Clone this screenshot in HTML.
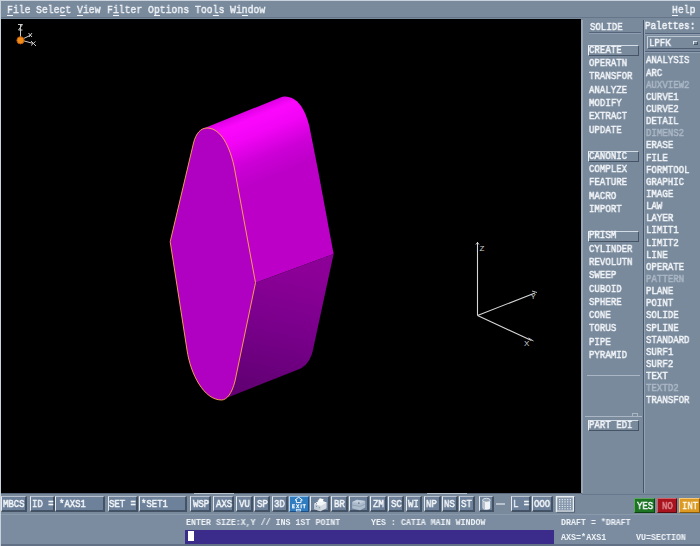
<!DOCTYPE html>
<html><head><meta charset="utf-8"><title>CATIA</title>
<style>
html,body{margin:0;padding:0;}
body{width:700px;height:546px;overflow:hidden;background:#798a9d;position:relative;font-family:"Liberation Mono",monospace;}
.abs{position:absolute;}
.t,.m,.s{will-change:transform;}
#view{position:absolute;left:1px;top:19.2px;width:580px;height:473.5px;background:#000;overflow:hidden;}
.t{position:absolute;white-space:pre;color:#f2f5f8;font-family:"Liberation Mono",monospace;font-weight:normal;-webkit-text-stroke:0.5px;font-size:10.5px;line-height:12px;transform-origin:0 0;transform:scaleX(.864);}
.t.dis{color:#acb8c6;}
.m{position:absolute;white-space:pre;color:#eef2f6;font-family:"Liberation Mono",monospace;font-weight:normal;-webkit-text-stroke:0.45px #f0f3f7;font-size:11.5px;line-height:13px;transform-origin:0 0;transform:scaleX(.85);}
.m u{text-decoration:none;position:relative;display:inline-block;}
.m u::after{content:'';position:absolute;left:0;right:0;top:12.4px;height:1px;background:#f2f5f8;}
.s{position:absolute;white-space:pre;color:#eef2f6;font-family:"Liberation Mono",monospace;font-weight:bold;font-size:8.4px;line-height:10px;transform-origin:0 0;transform:scaleX(.99);}
.tb{position:absolute;white-space:pre;color:#f2f5f8;font-family:"Liberation Mono",monospace;font-weight:normal;-webkit-text-stroke:0.55px #f2f5f8;font-size:11.5px;line-height:13px;transform-origin:0 0;transform:scaleX(.78);will-change:transform;}
.tbb{position:absolute;box-sizing:border-box;background:#6d819b;border-style:solid;border-width:1.4px 2px 2px 1.6px;border-color:#b8c3cf #445266 #445266 #e6ebf1;}
.btn{position:absolute;box-sizing:border-box;background:#798a9d;border:1.2px solid;border-color:#d4dce5 #465466 #465466 #eef2f6;}
.fld{position:absolute;box-sizing:border-box;background:#798a9d;border:1px solid;border-color:#465466 #c8d1dc #c8d1dc #465466;}
.hl{position:absolute;height:1px;background:#55647a;border-bottom:1px solid #8e9db0;}
.vl{position:absolute;width:1px;background:#465466;border-right:1px solid #93a2b4;}
</style></head><body>

<div class="abs" style="left:1px;top:514.3px;width:699px;height:31.7px;background:#7b8ca1;border-top:1px solid #8a9aad"></div>
<div class="abs" style="left:0;top:0;width:700px;height:1px;background:#c9d2dc"></div>
<div class="abs" style="left:0;top:0;width:1px;height:546px;background:#c9d2dc"></div>
<div class="abs" style="left:1px;top:17.2px;width:699px;height:1.3px;background:#66758a"></div>
<div class="m" style="left:6.6px;top:2.5px"><u>F</u>ile</div>
<div class="m" style="left:36px;top:2.5px">Sele<u>c</u>t</div>
<div class="m" style="left:77px;top:2.5px"><u>V</u>iew</div>
<div class="m" style="left:106.5px;top:2.5px">F<u>i</u>lter</div>
<div class="m" style="left:147.5px;top:2.5px">O<u>p</u>tions</div>
<div class="m" style="left:194.5px;top:2.5px">Too<u>l</u>s</div>
<div class="m" style="left:229.5px;top:2.5px">Wi<u>n</u>dow</div>
<div class="m" style="left:671.5px;top:2.5px"><u>H</u>elp</div>
<div id="view">
<svg width="580" height="473" viewBox="1 20 580 473" style="position:absolute;left:0;top:0.8px">
<defs>
<linearGradient id="gtop" x1="199.0" y1="131.0" x2="225.2" y2="195.9" gradientUnits="userSpaceOnUse">
<stop offset="0" stop-color="#e000e6"/><stop offset="0.12" stop-color="#fb08fc"/><stop offset="0.35" stop-color="#f204f5"/><stop offset="0.7" stop-color="#cc00d6"/><stop offset="1" stop-color="#bc00c8"/></linearGradient>
<linearGradient id="gbot" x1="290" y1="270" x2="262" y2="392" gradientUnits="userSpaceOnUse">
<stop offset="0" stop-color="#8c0098"/><stop offset="0.5" stop-color="#78008a"/><stop offset="1" stop-color="#620074"/></linearGradient>
</defs>
<!-- side surface (top fillet + upper right face) -->
<path d="M201 129.5 L281 97.3 C282.5 96.7 283.5 96.5 285 96.5 C297 97 305 108 309.5 127 L318 170 L333.6 254 L255.5 282.7 L200 220 Z" fill="url(#gtop)"/>
<!-- bottom face -->
<path d="M255.5 282.7 L333.6 254 L312.5 352 C310 361 305 366.5 299.5 369 L221.4 400 L225 380 Z" fill="url(#gbot)"/>
<!-- front face -->
<path d="M170.2 241.7 L193.5 143 C196 133 201 128 207 128 C218 128 228 140 234 166 L255.5 282.7 L235 381 C232 393 227 400 221.4 400 C204 400 190.5 374 187 350 Z" fill="#b000c2" stroke="#ffae48" stroke-width="0.9"/>
<!-- big axis -->
<g stroke="#d6d6d6" stroke-width="1.1" fill="none">
<path d="M477.5 315.5 L477.5 242 M477.5 315.5 L535 293 M477.5 315.5 L531.5 340.5"/>
</g>
<g fill="#d0d0d0" font-family="Liberation Sans" font-size="8">
<text x="479.5" y="251">Z</text><text x="530.5" y="298.5">Y</text><text x="524" y="346">X</text></g>
<path d="M475.8 244.5 L477.5 242.5 L479 244.5 M532 291 L537 292.5 M528.5 338 L533.5 341" stroke="#d0d0d0" stroke-width="0.9" fill="none"/>
<!-- small axis -->
<g stroke="#c8c8c8" stroke-width="1" fill="none">
<path d="M20.5 40 L20.5 25 M20.5 40 L31 35 M20.5 40 L33.5 43.5 M28.5 33 L32 37 M32 33 L29 37 M31 41 L36 46 M35.5 41.5 L31 45.5 M18 24.5 L22.5 24.5 L18.5 30 L22.5 30"/>
</g>
<circle cx="20.5" cy="40.3" r="3.6" fill="#f08a18" stroke="#b85a08" stroke-width="1"/>
</svg>
</div>
<div class="abs" style="left:1px;top:492.7px;width:581px;height:1.3px;background:#5a687c"></div>
<div class="abs" style="left:582px;top:493.8px;width:118px;height:1px;background:#68778c"></div>
<div class="abs" style="left:193.7px;top:492.7px;width:40.3px;height:1.2px;background:#b4bfcb"></div>
<div class="abs" style="left:427.4px;top:492.7px;width:39.5px;height:1.2px;background:#b4bfcb"></div>
<div class="abs" style="left:581px;top:20px;width:2px;height:473px;background:#98a6b6"></div>
<div class="vl" style="left:642.6px;top:20px;height:473px"></div>
<div class="t" style="left:589.5px;top:21px">SOLIDE</div>
<div class="hl" style="left:589px;top:31.8px;width:52px"></div>
<div class="t" style="left:645.3px;top:20px;transform:scaleX(.885)">Palettes:</div>
<div class="hl" style="left:645px;top:33px;width:55px"></div>
<div class="btn" style="left:647px;top:36.2px;width:54px;height:13.3px;border-color:#bcc7d2 #4f5e72 #4f5e72 #c8d1db"></div>
<div class="t" style="left:649px;top:36.7px">LPFK</div>
<div class="btn" style="left:693px;top:41px;width:5px;height:4px"></div>
<div class="hl" style="left:645px;top:51px;width:55px"></div>
<div class="btn" style="left:587.8px;top:44.8px;width:51.6px;height:11px"></div>
<div class="t" style="left:589.2px;top:43.7px">CREATE</div>
<div class="t" style="left:589.2px;top:56.8px">OPERATN</div>
<div class="t" style="left:589.2px;top:70.2px">TRANSFOR</div>
<div class="t" style="left:589.2px;top:83.6px">ANALYZE</div>
<div class="t" style="left:589.2px;top:96.9px">MODIFY</div>
<div class="t" style="left:589.2px;top:110.2px">EXTRACT</div>
<div class="t" style="left:589.2px;top:123.5px">UPDATE</div>
<div class="btn" style="left:587.8px;top:151.0px;width:51.6px;height:11px"></div>
<div class="t" style="left:589.2px;top:149.9px">CANONIC</div>
<div class="t" style="left:589.2px;top:163.1px">COMPLEX</div>
<div class="t" style="left:589.2px;top:176.3px">FEATURE</div>
<div class="t" style="left:589.2px;top:189.5px">MACRO</div>
<div class="t" style="left:589.2px;top:202.7px">IMPORT</div>
<div class="btn" style="left:587.8px;top:230.5px;width:51.6px;height:11px"></div>
<div class="t" style="left:589.2px;top:229.4px">PRISM</div>
<div class="t" style="left:589.2px;top:242.7px">CYLINDER</div>
<div class="t" style="left:589.2px;top:255.9px">REVOLUTN</div>
<div class="t" style="left:589.2px;top:269.2px">SWEEP</div>
<div class="t" style="left:589.2px;top:282.5px">CUBOID</div>
<div class="t" style="left:589.2px;top:295.8px">SPHERE</div>
<div class="t" style="left:589.2px;top:309.1px">CONE</div>
<div class="t" style="left:589.2px;top:322.4px">TORUS</div>
<div class="t" style="left:589.2px;top:335.7px">PIPE</div>
<div class="t" style="left:589.2px;top:349.0px">PYRAMID</div>
<div class="btn" style="left:587.8px;top:420.2px;width:51.6px;height:11px"></div>
<div class="t" style="left:589.2px;top:419.1px">PART EDI</div>
<div class="abs" style="left:586.5px;top:375px;width:53.5px;height:1px;background:#aab6c4"></div>
<div class="abs" style="left:584.5px;top:416px;width:57.5px;height:1px;background:#aab6c4"></div>
<div class="abs" style="left:632px;top:412.6px;width:5.6px;height:4px;box-sizing:border-box;border:1px solid #aab6c4;border-bottom:none"></div>
<div class="t" style="left:645.7px;top:54.4px">ANALYSIS</div>
<div class="t" style="left:645.7px;top:66.5px">ARC</div>
<div class="t dis" style="left:645.7px;top:78.7px">AUXVIEW2</div>
<div class="t" style="left:645.7px;top:90.8px">CURVE1</div>
<div class="t" style="left:645.7px;top:103.0px">CURVE2</div>
<div class="t" style="left:645.7px;top:115.1px">DETAIL</div>
<div class="t dis" style="left:645.7px;top:127.2px">DIMENS2</div>
<div class="t" style="left:645.7px;top:139.4px">ERASE</div>
<div class="t" style="left:645.7px;top:151.5px">FILE</div>
<div class="t" style="left:645.7px;top:163.7px">FORMTOOL</div>
<div class="t" style="left:645.7px;top:175.8px">GRAPHIC</div>
<div class="t" style="left:645.7px;top:187.9px">IMAGE</div>
<div class="t" style="left:645.7px;top:200.1px">LAW</div>
<div class="t" style="left:645.7px;top:212.2px">LAYER</div>
<div class="t" style="left:645.7px;top:224.4px">LIMIT1</div>
<div class="t" style="left:645.7px;top:236.5px">LIMIT2</div>
<div class="t" style="left:645.7px;top:248.6px">LINE</div>
<div class="t" style="left:645.7px;top:260.8px">OPERATE</div>
<div class="t dis" style="left:645.7px;top:272.9px">PATTERN</div>
<div class="t" style="left:645.7px;top:285.1px">PLANE</div>
<div class="t" style="left:645.7px;top:297.2px">POINT</div>
<div class="t" style="left:645.7px;top:309.3px">SOLIDE</div>
<div class="t" style="left:645.7px;top:321.5px">SPLINE</div>
<div class="t" style="left:645.7px;top:333.6px">STANDARD</div>
<div class="t" style="left:645.7px;top:345.8px">SURF1</div>
<div class="t" style="left:645.7px;top:357.9px">SURF2</div>
<div class="t" style="left:645.7px;top:370.0px">TEXT</div>
<div class="t dis" style="left:645.7px;top:382.2px">TEXTD2</div>
<div class="t" style="left:645.7px;top:394.3px">TRANSFOR</div>
<div class="tbb" style="left:1.3px;top:495.5px;width:25.7px;height:16.5px;"></div>
<div class="tb" style="left:3.0px;top:497.4px;">MBCS</div>
<div class="tbb" style="left:30.2px;top:495.5px;width:24.5px;height:16.5px;"></div>
<div class="tb" style="left:32.2px;top:497.4px;">ID =</div>
<div class="tbb" style="left:55.3px;top:495.5px;width:49.5px;height:16.5px;"></div>
<div class="tb" style="left:58.699999999999996px;top:497.4px;">*AXS1</div>
<div class="tbb" style="left:107.5px;top:495.5px;width:30.2px;height:16.5px;"></div>
<div class="tb" style="left:109.2px;top:497.4px;">SET =</div>
<div class="tbb" style="left:138.5px;top:495.5px;width:48.7px;height:16.5px;"></div>
<div class="tb" style="left:141.0px;top:497.4px;">*SET1</div>
<div class="tbb" style="left:190.4px;top:495.5px;width:21.1px;height:16.5px;"></div>
<div class="tb" style="left:192.6px;top:497.4px;">WSP</div>
<div class="tbb" style="left:213px;top:495.5px;width:21px;height:16.5px;"></div>
<div class="tb" style="left:215.7px;top:497.4px;">AXS</div>
<div class="tbb" style="left:236.3px;top:495.5px;width:16.5px;height:16.5px;"></div>
<div class="tb" style="left:238.60000000000002px;top:497.4px;">VU</div>
<div class="tbb" style="left:254.4px;top:495.5px;width:15.6px;height:16.5px;"></div>
<div class="tb" style="left:256.5px;top:497.4px;">SP</div>
<div class="tbb" style="left:272.1px;top:495.5px;width:16.0px;height:16.5px;"></div>
<div class="tb" style="left:274.0px;top:497.4px;">3D</div>
<div class="tbb" style="left:289.1px;top:495.5px;width:19.9px;height:16.5px;background:#2f7cc0;border-width:1.2px 1.4px 1.4px 1.4px;border-color:#8fbde6 #1d4f86 #1d4f86 #b8d4ee;"></div>
<div class="tbb" style="left:310.3px;top:495.5px;width:19.6px;height:16.5px;"></div>
<div class="tbb" style="left:331.4px;top:495.5px;width:16.5px;height:16.5px;"></div>
<div class="tb" style="left:333.79999999999995px;top:497.4px;">BR</div>
<div class="tbb" style="left:349.2px;top:495.5px;width:19.7px;height:16.5px;"></div>
<div class="tbb" style="left:370.2px;top:495.5px;width:16.6px;height:16.5px;"></div>
<div class="tb" style="left:372.59999999999997px;top:497.4px;">ZM</div>
<div class="tbb" style="left:388.3px;top:495.5px;width:16.1px;height:16.5px;"></div>
<div class="tb" style="left:390.5px;top:497.4px;">SC</div>
<div class="tbb" style="left:405.9px;top:495.5px;width:16.5px;height:16.5px;"></div>
<div class="tb" style="left:407.79999999999995px;top:497.4px;">WI</div>
<div class="tbb" style="left:424px;top:495.5px;width:16.5px;height:16.5px;"></div>
<div class="tb" style="left:425.9px;top:497.4px;">NP</div>
<div class="tbb" style="left:441.8px;top:495.5px;width:16.3px;height:16.5px;"></div>
<div class="tb" style="left:443.6px;top:497.4px;">NS</div>
<div class="tbb" style="left:459.4px;top:495.5px;width:15.7px;height:16.5px;"></div>
<div class="tb" style="left:461.0px;top:497.4px;">ST</div>
<div class="tbb" style="left:478.6px;top:495.5px;width:15.7px;height:16.5px;"></div>
<div class="tbb" style="left:511.2px;top:495.5px;width:19.5px;height:16.5px;"></div>
<div class="tb" style="left:513.1px;top:497.4px;">L =</div>
<div class="tbb" style="left:531.6px;top:495.5px;width:21.4px;height:16.5px;"></div>
<div class="tb" style="left:533.8000000000001px;top:497.4px;">OOO</div>
<div class="tbb" style="left:634.4px;top:498.3px;width:20.4px;height:15px;background:#1c7422;border-color:#5aa860 #0c4410 #0c4410 #5aa860;border-width:1.5px"></div>
<div class="tb" style="left:637.1999999999999px;top:499.3px;color:#f2f5f8;-webkit-text-stroke-color:#f2f5f8">YES</div>
<div class="tbb" style="left:656.6px;top:498.3px;width:20.4px;height:15px;background:#a8141e;border-color:#d06068 #600810 #600810 #d06068;border-width:1.5px"></div>
<div class="tb" style="left:661.8000000000001px;top:499.3px;color:#e08890;-webkit-text-stroke-color:#e08890">NO</div>
<div class="tbb" style="left:678.6px;top:498.3px;width:21.9px;height:15px;background:#dc9a22;border-color:#f4c878 #8a5c08 #8a5c08 #f4c878;border-width:1.5px"></div>
<div class="tb" style="left:681.8000000000001px;top:499.3px;color:#fbf6e8;-webkit-text-stroke-color:#fbf6e8">INT</div>
<svg class="abs" style="left:0;top:490px" width="700" height="30" viewBox="0 490 700 30">
<!-- exit icon -->
<path d="M298.7 497.2 L302.3 500 L301 500 L301 502.6 L296.4 502.6 L296.4 500 L295.1 500 Z" fill="none" stroke="#f4f8fc" stroke-width="1"/>
<g fill="#f4f8fc">
<rect x="292.3" y="504.3" width="1" height="4"/><rect x="292.3" y="504.3" width="2.6" height="1"/><rect x="292.3" y="505.8" width="2.2" height="0.9"/><rect x="292.3" y="507.3" width="2.6" height="1"/>
<path d="M295.8 504.3 L297 504.3 L299.6 508.3 L298.4 508.3 Z M298.4 504.3 L299.6 504.3 L297 508.3 L295.8 508.3 Z"/>
<rect x="300.6" y="504.3" width="1.1" height="4"/>
<rect x="302.5" y="504.3" width="3.4" height="1"/><rect x="303.7" y="504.3" width="1.1" height="4"/>
</g>
<rect x="296.3" y="509.5" width="4.2" height="1.5" fill="none" stroke="#e4ecf4" stroke-width="0.8"/>
<!-- printer icon -->
<path d="M314 504 L320 500.2 L326.6 502.6 L326.6 508.2 L320.4 511.2 L314 509 Z" fill="#d4dbe3"/>
<path d="M314 504 L320 500.2 L326.6 502.6 L320.6 506 Z" fill="#f2f5f8"/>
<path d="M317.5 501 L319.8 498.3 L323.6 499.2 L322.5 502.2 Z" fill="#ffffff"/>
<path d="M314 504 L320.6 506 L320.4 511.2 L314 509 Z" fill="#c2ccd6"/>
<g fill="#7d8b9c"><rect x="316" y="503.2" width="1" height="1"/><rect x="316" y="505.8" width="1" height="1"/><rect x="318.8" y="507.2" width="1" height="1"/><rect x="318" y="499.4" width="1.2" height="0.8"/></g>
<!-- chest icon -->
<path d="M352.2 502 L357 499.8 L365.2 501 L365.2 507.6 L360 510.2 L352.2 508.6 Z" fill="#adbccc"/>
<path d="M352.2 502 L357 499.8 L365.2 501 L360 503.4 Z" fill="#c2cedb"/>
<path d="M352.2 505 L360 506.4 L365.2 504" fill="none" stroke="#8696aa" stroke-width="0.7"/><rect x="358" y="502.4" width="1.6" height="1.4" fill="#6a7a90"/>
<!-- cylinder icon -->
<path d="M482.6 500.2 L482.6 507.8 A3.8 1.9 0 0 0 490.2 507.8 L490.2 500.2 Z" fill="#eef2f6"/>
<path d="M482.6 500.2 L482.6 507.8 A3.8 1.9 0 0 0 485 509.4 L485 501.8 Z" fill="#b8c2ce"/>
<ellipse cx="486.4" cy="500.2" rx="3.8" ry="1.9" fill="#93a2b4" stroke="#e8edf2" stroke-width="0.8"/>
<!-- grid icon -->
<rect x="556.5" y="496.7" width="17" height="14.6" fill="#8798ad" stroke="#e9eef3" stroke-width="1.5"/><path d="M557 512.2 H574.6 V497" fill="none" stroke="#4f5d70" stroke-width="1"/>
<g stroke="#e6ecf2" stroke-width="1.1" stroke-dasharray="1.2 1.5">
<path d="M559 499.6 H572 M559 501.9 H572 M559 504.2 H572 M559 506.5 H572 M559 508.8 H572"/>
</g>
</svg>
<div class="abs" style="left:496.4px;top:502.7px;width:8.8px;height:2.6px;background:#b8c3cf"></div>
<div class="s" style="left:185.5px;top:517.6px">ENTER SIZE:X,Y // INS 1ST POINT</div>
<div class="s" style="left:371px;top:517.6px">YES : CATIA MAIN WINDOW</div>
<div class="s" style="left:561px;top:517.6px">DRAFT = *DRAFT</div>
<div class="s" style="left:561px;top:532.8px">AXS=*AXS1</div>
<div class="s" style="left:636px;top:532.8px">VU=SECTION</div>
<div class="abs" style="left:184.5px;top:529.7px;width:369.3px;height:14.5px;background:#3b2b8b"></div>
<div class="abs" style="left:188.2px;top:531.3px;width:6px;height:10.2px;background:#fff"></div>
<div class="abs" style="left:1px;top:543.8px;width:699px;height:2.2px;background:#627186"></div>
</body></html>
